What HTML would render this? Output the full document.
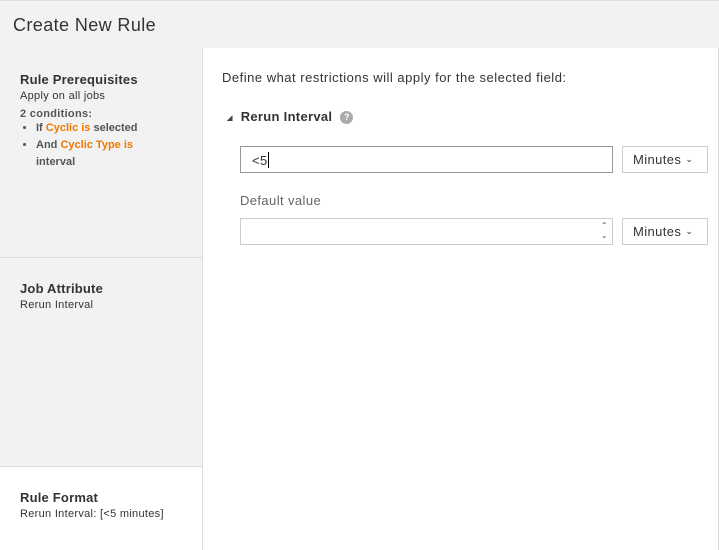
<!DOCTYPE html>
<html><head><style>
body{margin:0;width:719px;height:550px;overflow:hidden;font-family:"Liberation Sans",sans-serif;background:#fff;color:#333;position:relative}
.hdr{position:absolute;left:0;top:0;width:719px;height:48px;background:#f2f2f2;border-top:1px solid #ddd;box-sizing:border-box}
.hdr h1{margin:0;position:absolute;left:13px;top:14px;font-size:18px;font-weight:normal;color:#333;letter-spacing:0.4px}
.side{position:absolute;left:0;top:48px;width:202px;border-right:1px solid #ddd;height:502px}
.sec{position:absolute;left:0;width:202px;box-sizing:border-box;padding-left:20px;border-bottom:1px solid #ddd}
.sec b{display:block;font-size:13px;color:#333;letter-spacing:0.2px}
.sec .s{font-size:11px;color:#333;letter-spacing:0.3px}
.o{color:#f07800}
ul{margin:0;padding-left:16px;font-size:11px;font-weight:bold;color:#555;line-height:17px}
.main{position:absolute;left:203px;top:48px;right:0;bottom:0;border-right:1px solid #ddd}
.box{position:absolute;border:1px solid #ccc;box-sizing:border-box;background:#fff;font-size:13px;color:#333;letter-spacing:0.4px}
</style></head><body>
<div class="hdr"><h1>Create New Rule</h1></div>
<div class="side">
 <div class="sec" style="top:0;height:210px;background:#f2f2f2;padding-top:24px">
  <b>Rule Prerequisites</b><div class="s" style="margin-top:3px">Apply on all jobs</div>
  <div style="font-size:11px;font-weight:bold;color:#555;margin-top:6px;letter-spacing:0.3px">2 conditions:</div>
  <ul><li>If <span class="o">Cyclic is</span> selected</li><li>And <span class="o">Cyclic Type is</span><br>interval</li></ul>
 </div>
 <div class="sec" style="top:210px;height:209px;background:#f2f2f2;padding-top:23px">
  <b>Job Attribute</b><div class="s" style="margin-top:3px">Rerun Interval</div>
 </div>
 <div class="sec" style="top:419px;height:83px;background:#fff;padding-top:23px;border-bottom:none">
  <b>Rule Format</b><div class="s" style="margin-top:3px">Rerun Interval: [&lt;5 minutes]</div>
 </div>
</div>
<div class="main">
 <div style="position:absolute;left:19px;top:22px;font-size:13px;letter-spacing:0.5px">Define what restrictions will apply for the selected field:</div>
 <div style="position:absolute;left:24px;top:61px;font-size:13px;font-weight:bold;letter-spacing:0.3px"><span style="font-size:7px;color:#444;margin-right:8px;vertical-align:1px">&#9698;</span>Rerun Interval <span style="display:inline-block;width:13px;height:13px;border-radius:50%;background:#aaa;color:#fff;font-size:9px;text-align:center;line-height:13px;margin-left:4px;vertical-align:1px;letter-spacing:0">?</span></div>
 <div class="box" style="left:37px;top:98px;width:373px;height:27px;border-color:#999;padding:5px 11px">&lt;5<span style="display:inline-block;width:1px;height:16px;background:#000;vertical-align:-3px"></span></div>
 <div class="box" style="left:419px;top:98px;width:86px;height:27px;padding:5px 10px">Minutes <span style="font-size:9px;vertical-align:2px">&#8964;</span></div>
 <div style="position:absolute;left:37px;top:145px;font-size:13px;color:#666;letter-spacing:0.4px">Default value</div>
 <div class="box" style="left:37px;top:170px;width:373px;height:27px"><span style="position:absolute;right:4px;top:2px;font-size:8px;line-height:10px;color:#555">&#8963;<br>&#8964;</span></div>
 <div class="box" style="left:419px;top:170px;width:86px;height:27px;padding:5px 10px">Minutes <span style="font-size:9px;vertical-align:2px">&#8964;</span></div>
</div>
</body></html>
